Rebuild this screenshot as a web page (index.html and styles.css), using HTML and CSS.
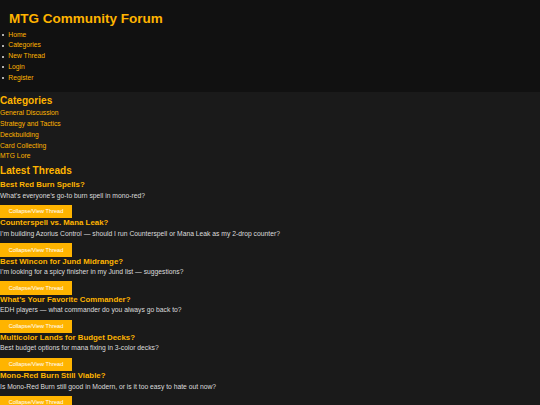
FILE: index.html
```html
<!DOCTYPE html>
<html lang="en">
<head>
<meta charset="utf-8">
<title>MTG Community Forum</title>
<link rel="stylesheet" href="styles.css">
</head>
<body>
<header class="site-header">
  <h1 class="site-title">MTG Community Forum</h1>
  <nav>
    <ul class="nav-list">
      <li><a href="#">Home</a></li>
      <li><a href="#">Categories</a></li>
      <li><a href="#">New Thread</a></li>
      <li><a href="#">Login</a></li>
      <li><a href="#">Register</a></li>
    </ul>
  </nav>
</header>
<main class="content">
  <section class="categories">
    <h2 class="section-title">Categories</h2>
    <ul class="category-list">
      <li><a href="#">General Discussion</a></li>
      <li><a href="#">Strategy and Tactics</a></li>
      <li><a href="#">Deckbuilding</a></li>
      <li><a href="#">Card Collecting</a></li>
      <li><a href="#">MTG Lore</a></li>
    </ul>
  </section>
  <section class="threads">
    <h2 class="section-title threads-title">Latest Threads</h2>
    <div class="thread">
      <h3 class="thread-title">Best Red Burn Spells?</h3>
      <p class="thread-text">What’s everyone’s go-to burn spell in mono-red?</p>
      <button class="toggle-btn">Collapse/View Thread</button>
    </div>
    <div class="thread">
      <h3 class="thread-title">Counterspell vs. Mana Leak?</h3>
      <p class="thread-text">I’m building Azorius Control — should I run Counterspell or Mana Leak as my 2-drop counter?</p>
      <button class="toggle-btn">Collapse/View Thread</button>
    </div>
    <div class="thread">
      <h3 class="thread-title">Best Wincon for Jund Midrange?</h3>
      <p class="thread-text">I’m looking for a spicy finisher in my Jund list — suggestions?</p>
      <button class="toggle-btn">Collapse/View Thread</button>
    </div>
    <div class="thread">
      <h3 class="thread-title">What’s Your Favorite Commander?</h3>
      <p class="thread-text">EDH players — what commander do you always go back to?</p>
      <button class="toggle-btn">Collapse/View Thread</button>
    </div>
    <div class="thread">
      <h3 class="thread-title">Multicolor Lands for Budget Decks?</h3>
      <p class="thread-text">Best budget options for mana fixing in 3-color decks?</p>
      <button class="toggle-btn">Collapse/View Thread</button>
    </div>
    <div class="thread">
      <h3 class="thread-title">Mono-Red Burn Still Viable?</h3>
      <p class="thread-text">Is Mono-Red Burn still good in Modern, or is it too easy to hate out now?</p>
      <button class="toggle-btn">Collapse/View Thread</button>
    </div>
  </section>
</main>
</body>
</html>
```
FILE: styles.css
```css
html, body {
  margin: 0;
  padding: 0;
  background: #1a1a1a;
}

body {
  font-family: "Liberation Sans", Arial, sans-serif;
  font-size: 6.75px;
  color: #dddddd;
}

a {
  color: #ffb400;
  text-decoration: none;
}

.site-header {
  background: #111111;
  padding: 11px 0 7.5px;
}

.site-title {
  margin: 0 0 3px 9px;
  font-size: 13.5px;
  line-height: 15.5px;
  font-weight: bold;
  color: #ffb400;
}

.nav-list {
  margin: 0;
  padding-left: 8.3px;
  list-style: none;
}

.nav-list li {
  line-height: 10.9px;
}

.nav-list li::before {
  content: "";
  display: inline-block;
  width: 2px;
  height: 2px;
  margin-left: -6px;
  margin-right: 4px;
  border-radius: 50%;
  background: #e6e6e6;
  vertical-align: 0.8px;
}

.content {
  padding-top: 3.2px;
}

.section-title {
  margin: 0 0 2.1px;
  font-size: 10.125px;
  line-height: 11.6px;
  font-weight: bold;
  color: #ffb400;
}

.threads-title {
  margin: 2.8px 0 3.9px;
}

.category-list {
  margin: 0;
  padding: 0;
  list-style: none;
}

.category-list li {
  line-height: 10.7px;
}

.thread-title {
  margin: 0 0 2.5px;
  font-size: 7.875px;
  line-height: 9px;
  font-weight: bold;
  color: #ffb400;
}

.thread-text {
  margin: 0 0 5.6px;
  line-height: 7.8px;
}

.toggle-btn {
  display: block;
  margin: 0;
  padding: 3.4px 8.7px;
  border: 0;
  border-radius: 0;
  background: #ffb400;
  color: #ffffff;
  font-family: "Liberation Sans", Arial, sans-serif;
  font-size: 5.625px;
  line-height: 6.5px;
}
```
